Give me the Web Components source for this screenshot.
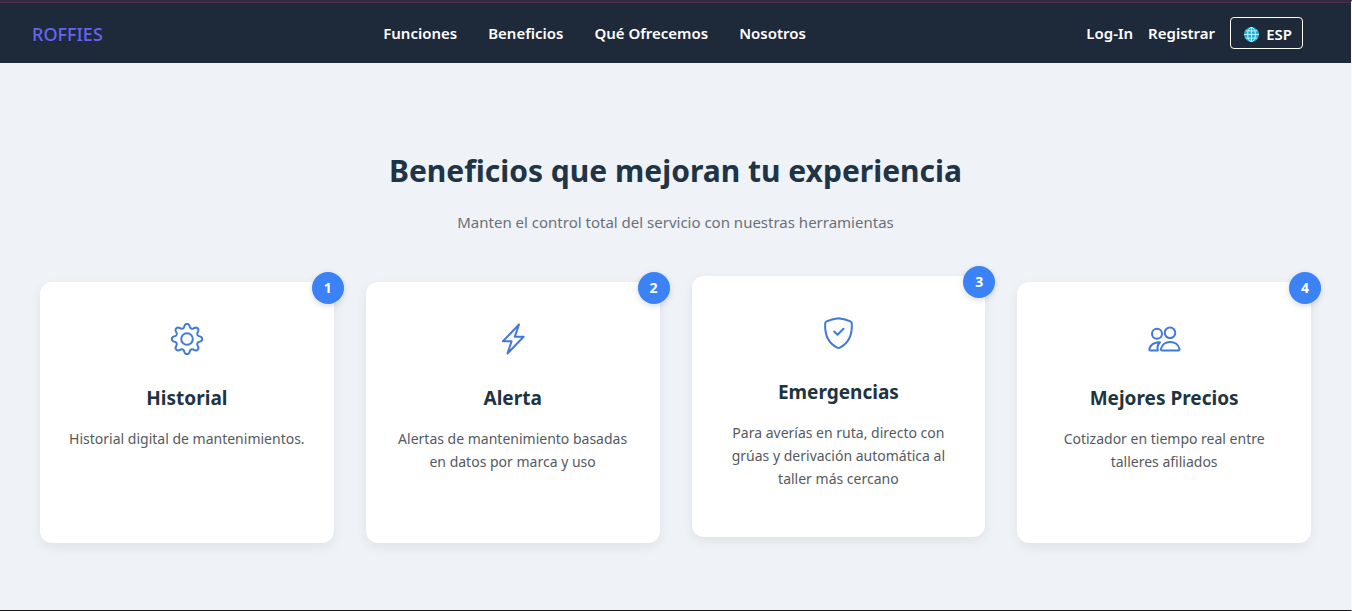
<!DOCTYPE html>
<html lang="es">
<head>
<meta charset="utf-8">
<meta name="viewport" content="width=device-width, initial-scale=1">
<title>Roffies</title>
<style>
  html, body { margin: 0; height: 100%; }
  body { font-family: "Segoe UI", "Noto Sans", "Open Sans", sans-serif; }
</style>
</head>
<body>
<roffies-page>
  <site-header slot="header"></site-header>
  <benefits-section>
    <span slot="title">Beneficios que mejoran tu experiencia</span>
    <span slot="subtitle">Manten el control total del servicio con nuestras herramientas</span>
    <benefit-card number="1" icon="gear"><span slot="title">Historial</span>Historial digital de mantenimientos.</benefit-card>
    <benefit-card number="2" icon="bolt"><span slot="title">Alerta</span>Alertas de mantenimiento basadas en datos por marca y uso</benefit-card>
    <benefit-card number="3" icon="shield" raised><span slot="title">Emergencias</span>Para averías en ruta, directo con grúas y derivación automática al taller más cercano</benefit-card>
    <benefit-card number="4" icon="people"><span slot="title">Mejores Precios</span>Cotizador en tiempo real entre talleres afiliados</benefit-card>
  </benefits-section>
</roffies-page>
<script>
const define = (name, html, setup) => customElements.define(name, class extends HTMLElement {
  constructor() {
    super();
    this.attachShadow({ mode: "open" }).innerHTML = html;
  }
  connectedCallback() { if (setup) setup(this, this.shadowRoot); }
});

define("roffies-page", `
  <style>
    :host { display: flex; flex-direction: column; min-height: 100%; box-sizing: border-box;
      background: #eff3f8; border-top: 2px solid #2e2b42; border-right: 1px solid #f5f8fd; border-bottom: 1px solid #17181c; }
    main { flex: 1; }
  </style>
  <slot name="header"></slot>
  <main><slot></slot></main>`);

define("site-header", `
  <style>
    :host { display: block; background: #1e293a; border-top: 1px solid #4b2f4b; }
    header { display: flex; align-items: center; justify-content: space-between; height: 60px; padding: 0 48px 0 32px; }
    nav { display: flex; align-items: center; gap: 31px; }
    nav.account { gap: 15px; }
    a { color: #fff; text-decoration: none; font-size: 15px; line-height: 20px; font-weight: 600; }
    a.logo { color: #6366f1; font-size: 18px; line-height: 24px; font-weight: 500; padding-top: 2px; }
    button { display: flex; align-items: center; justify-content: center; gap: 7px; box-sizing: border-box; height: 32px; padding: 2px 10px 0 13px;
      margin: 0; background: none; border: 1px solid #fff; border-radius: 4px; color: #fff; font: 600 15px/20px "Segoe UI", "Noto Sans", "Open Sans", sans-serif; }
    svg { width: 15px; height: 15px; }
  </style>
  <header>
    <a class="logo" href="#">ROFFIES</a>
    <nav aria-label="Principal">
      <a href="#funciones">Funciones</a><a href="#beneficios">Beneficios</a><a href="#ofrecemos">Qué Ofrecemos</a><a href="#nosotros">Nosotros</a>
    </nav>
    <nav class="account" aria-label="Cuenta">
      <a href="#login">Log-In</a><a href="#registrar">Registrar</a>
      <button type="button"><svg viewBox="0 0 14 14" aria-hidden="true"><circle cx="7" cy="7" r="7" fill="#16b3d6"/><g fill="none" stroke="#d5f6fc" stroke-width=".8"><path d="M7 0v14M0 7h14M1.4 3.6h11.2M1.4 10.4h11.2"/><ellipse cx="7" cy="7" rx="3.6" ry="6.7"/></g></svg>ESP</button>
    </nav>
  </header>`);

define("benefits-section", `
  <style>
    :host { display: block; padding: 80px 40px 64px; text-align: center; }
    h2 { margin: 0; padding-top: 4px; font-size: 30px; line-height: 48px; font-weight: 700; color: #203445; }
    p { margin: 15px 0 0; font-size: 15px; line-height: 24px; color: #6b7077; }
    .grid { display: grid; grid-template-columns: repeat(auto-fit, minmax(260px, 1fr)); gap: 32px; margin-top: 48px; }
  </style>
  <section aria-labelledby="h">
    <h2 id="h"><slot name="title"></slot></h2>
    <p><slot name="subtitle"></slot></p>
    <div class="grid"><slot></slot></div>
  </section>`);

const icons = {
  gear: `<path d="${(() => {
    // Eight rounded teeth traced as a smooth radial wave around the hub.
    const points = [];
    for (let i = 0; i < 160; i++) {
      const a = i / 160 * Math.PI * 2;
      const r = 13.2 + 1.9 * Math.tanh(1.2 * Math.cos(8 * a)) / Math.tanh(1.2);
      points.push((16 + r * Math.sin(a)).toFixed(2) + " " + (16 - r * Math.cos(a)).toFixed(2));
    }
    return "M" + points.join("L") + "Z";
  })()}"/><circle cx="16" cy="16" r="5.8"/>`,
  bolt: `<path d="M22 1.500 5.900 18.300h8.700L10.500 30.500 26.600 13.700H17.800Z"/>`,
  shield: `<path d="M16.500 1.200C13.200 1.600 7.500 3 4.600 4.400C3.600 4.900 3.200 5.500 3.200 6.500C2.600 18.500 7.300 26.700 15.200 30.600Q16.500 31.300 17.800 30.600C25.700 26.700 30.400 18.500 29.800 6.500C29.800 5.500 29.400 4.900 28.400 4.400C25.500 3 19.800 1.600 16.500 1.200Z"/><path d="m12.200 14.500 3.300 3.300 6-6"/>`,
  people: `<circle cx="22" cy="9.800" r="5.300"/><circle cx="9" cy="10.800" r="5"/><path d="M14 27.400h16.500c.8 0 1.200-.6 1-1.500-1-4.200-4.700-7-9.300-7s-8.300 2.800-9.300 7c-.2.900.2 1.500 1.100 1.500Z"/><path d="M9.900 27.400H2.400c-.8 0-1.200-.5-1-1.300 1-4.200 4.400-7 10.600-6.900-2.100 2.200-3.200 5-2.100 8.200Z"/>`
};

define("benefit-card", `
  <style>
    :host { display: block; position: relative; box-sizing: border-box; min-height: 261px; padding: 40px 24px 32px; background: #fff; border-radius: 12px;
      box-shadow: 0 4px 12px rgba(0, 0, 0, .07); text-align: center; }
    :host([raised]) { transform: translateY(-6px); }
    .badge { position: absolute; top: -10px; right: -10px; width: 32px; height: 32px; border-radius: 50%; background: #3b82f6; color: #fff;
      font-size: 14px; line-height: 32px; font-weight: 700; box-shadow: 0 2px 6px rgba(0, 0, 0, .15); }
    svg { display: block; width: 34px; height: 34px; margin: 0 auto; fill: none; stroke: #4179d8; stroke-width: 2; stroke-linecap: round; stroke-linejoin: round; }
    h3 { margin: 28px 0 0; font-size: 19px; line-height: 28px; font-weight: 700; color: #203440; }
    p { margin: 15px 0 0; font-size: 14px; line-height: 23px; color: #555a5f; }
  </style>
  <span class="badge"></span>
  <svg viewBox="-1 -1 34 34" aria-hidden="true"></svg>
  <h3><slot name="title"></slot></h3>
  <p><slot></slot></p>`, (host, root) => {
    root.querySelector(".badge").textContent = host.getAttribute("number");
    root.querySelector("svg").innerHTML = icons[host.getAttribute("icon")];
});
</script>
</body>
</html>
